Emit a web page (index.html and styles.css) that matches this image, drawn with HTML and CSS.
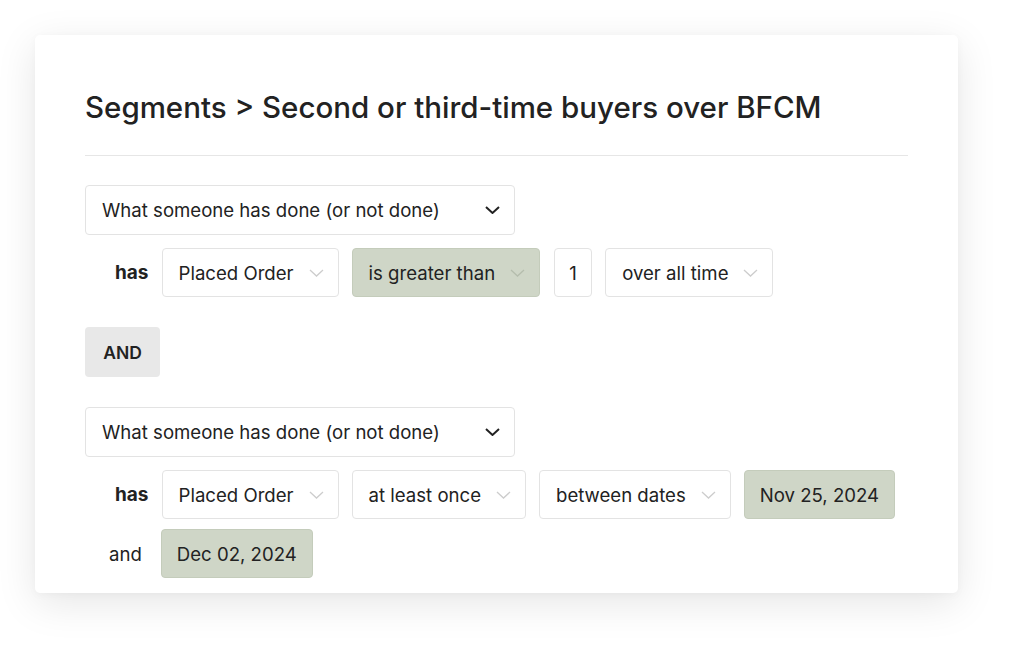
FILE: index.html
```html
<!DOCTYPE html>
<html>
<head>
<meta charset="utf-8">
<link rel="stylesheet" href="styles.css">
</head>
<body>
<div class="page">
  <div class="card">
    <h1 class="title">Segments &gt; Second or third-time buyers over BFCM</h1>
    <hr class="divider">

    <div class="group">
      <div class="select big">
        <span>What someone has done (or not done)</span>
        <svg class="chev dark" viewBox="0 0 15 8"><path d="M1 1l6.5 6 6.5-6"/></svg>
      </div>
      <div class="row">
        <span class="kw">has</span>
        <div class="select"><span>Placed Order</span><svg class="chev" viewBox="0 0 15 8"><path d="M1 1l6.5 6 6.5-6"/></svg></div>
        <div class="select green"><span>is greater than</span><svg class="chev" viewBox="0 0 15 8"><path d="M1 1l6.5 6 6.5-6"/></svg></div>
        <div class="select num"><span>1</span></div>
        <div class="select"><span>over all time</span><svg class="chev" viewBox="0 0 15 8"><path d="M1 1l6.5 6 6.5-6"/></svg></div>
      </div>
    </div>

    <div class="and">AND</div>

    <div class="group">
      <div class="select big">
        <span>What someone has done (or not done)</span>
        <svg class="chev dark" viewBox="0 0 15 8"><path d="M1 1l6.5 6 6.5-6"/></svg>
      </div>
      <div class="row">
        <span class="kw">has</span>
        <div class="select"><span>Placed Order</span><svg class="chev" viewBox="0 0 15 8"><path d="M1 1l6.5 6 6.5-6"/></svg></div>
        <div class="select"><span>at least once</span><svg class="chev" viewBox="0 0 15 8"><path d="M1 1l6.5 6 6.5-6"/></svg></div>
        <div class="select"><span>between dates</span><svg class="chev" viewBox="0 0 15 8"><path d="M1 1l6.5 6 6.5-6"/></svg></div>
        <div class="select green date"><span>Nov 25, 2024</span></div>
        <span class="conj">and</span>
        <div class="select green date"><span>Dec 02, 2024</span></div>
      </div>
    </div>
  </div>
</div>
</body>
</html>
```

FILE: styles.css
```css
html, body {
  margin: 0;
  padding: 0;
  background: #ffffff;
}
body {
  font-family: Inter, "Liberation Sans", sans-serif;
  color: #222222;
}
.page {
  width: 1013px;
  height: 648px;
  padding: 35px 0 0 35px;
  box-sizing: border-box;
}
.card {
  width: 923px;
  height: 558px;
  box-sizing: border-box;
  background: #fff;
  border-radius: 5px;
  box-shadow: 0 10px 40px rgba(0, 0, 0, 0.10), 0 2px 8px rgba(0,0,0,0.03);
  padding: 50px 50px 0 50px;
}
.title {
  margin: 0;
  font-size: 29.5px;
  font-weight: 500;
  line-height: 44px;
  letter-spacing: 0;
  color: #222222;
}
.divider {
  border: 0;
  border-top: 1px solid #e6e6e6;
  margin: 26px 0 29px 0;
}
.group {
  display: flex;
  flex-direction: column;
  gap: 13px;
}
.select {
  display: flex;
  align-items: center;
  height: 49px;
  box-sizing: border-box;
  border: 1px solid #e3e3e3;
  border-radius: 4px;
  background: #fff;
  padding: 0 14px 0 16px;
  font-size: 18.6px;
  gap: 15px;
  color: #222222;
}
.select.big {
  height: 50px;
  width: 430px;
  justify-content: space-between;
}
.select.green {
  background: #cfd6c7;
  border-color: #c4ccbb;
}
.select.num {
  width: 38px;
  padding: 0;
  justify-content: center;
  margin-left: 1px;
}
.select.date {
  padding: 0 15px;
}
.chev {
  width: 15px;
  height: 8px;
  fill: none;
  stroke: #cdcdcd;
  stroke-width: 1.3;
}
.green .chev {
  stroke: #b5bdad;
}
.chev.dark {
  stroke: #222222;
  stroke-width: 2;
}
.row {
  display: flex;
  flex-wrap: wrap;
  align-items: center;
  column-gap: 13px;
  row-gap: 10px;
  padding-left: 24px;
}
.kw {
  font-size: 19px;
  font-weight: 700;
  margin-left: 6px;
}
.conj {
  font-size: 18.6px;
  margin-right: 6px;
}
.and {
  display: inline-flex;
  align-items: center;
  justify-content: center;
  width: 75px;
  height: 50px;
  margin: 30px 0 30px 0;
  background: #e8e8e8;
  border-radius: 4px;
  font-size: 17.5px;
  font-weight: 600;
}
```
